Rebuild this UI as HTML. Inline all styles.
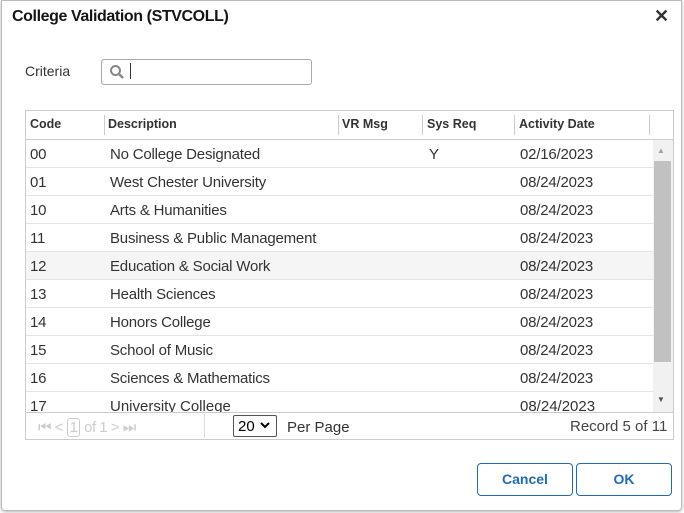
<!DOCTYPE html><html><head><style>
*{box-sizing:border-box;margin:0;padding:0}
body{width:684px;height:513px;background:#fff;font-family:"Liberation Sans",sans-serif;color:#333;position:relative;overflow:hidden}
.dlg{position:absolute;left:1px;top:0;width:681px;height:511px;border:1px solid #bbb;border-radius:0 0 4px 4px;box-shadow:0 1px 3px rgba(0,0,0,.3)}
.t{position:absolute;left:12px;top:8px;font-weight:bold;font-size:16px;color:#151515;letter-spacing:-0.4px}
.x{position:absolute;left:654px;top:6px;font-size:18px;font-weight:bold;color:#333}
.abs{position:absolute}
.row{position:absolute;left:26px;width:627px;height:28px;border-bottom:1px solid #e4e4e4;font-size:15px;color:#333}
.row span{position:absolute;top:6px;letter-spacing:-0.2px}
.hd span{position:absolute;top:6px;font-size:12.5px;font-weight:bold;color:#333}
.sep{position:absolute;top:4px;width:1px;height:20px;background:#ccc}
.btn{position:absolute;top:463px;height:33px;border:1px solid #1f6bb8;border-radius:4px;color:#1f6bb8;font-weight:bold;font-size:14px;text-align:center;line-height:31px}
</style></head><body>
<div class="dlg"></div>
<div class="t">College Validation (STVCOLL)</div>
<div class="x">✕</div>
<div class="abs" style="left:25px;top:63px;font-size:14px;color:#333">Criteria</div>
<div class="abs" style="left:101px;top:59px;width:211px;height:26px;border:1px solid #aaa;border-radius:3px"></div>
<svg class="abs" style="left:109px;top:64px" width="16" height="16"><circle cx="6.5" cy="6.5" r="4.5" fill="none" stroke="#888" stroke-width="2"/><line x1="10" y1="10" x2="14" y2="14" stroke="#888" stroke-width="2.5"/></svg>
<div class="abs" style="left:130px;top:63px;width:1px;height:16px;background:#333"></div>
<div class="abs" style="left:25px;top:110px;width:649px;height:330px;border:1px solid #ccc"></div>
<div class="abs hd" style="left:26px;top:111px;width:647px;height:29px;border-bottom:1px solid #ccc">
<span style="left:4px">Code</span><div class="sep" style="left:78px"></div>
<span style="left:82px">Description</span><div class="sep" style="left:312px"></div>
<span style="left:316px">VR Msg</span><div class="sep" style="left:396px"></div>
<span style="left:401px">Sys Req</span><div class="sep" style="left:488px"></div>
<span style="left:493px">Activity Date</span><div class="sep" style="left:623px"></div>
</div>
<div class="row" style="top:140px"><span style="left:4px">00</span><span style="left:84px">No College Designated</span><span style="left:403px">Y</span><span style="left:494px">02/16/2023</span></div>
<div class="row" style="top:168px"><span style="left:4px">01</span><span style="left:84px">West Chester University</span><span style="left:494px">08/24/2023</span></div>
<div class="row" style="top:196px"><span style="left:4px">10</span><span style="left:84px">Arts &amp; Humanities</span><span style="left:494px">08/24/2023</span></div>
<div class="row" style="top:224px"><span style="left:4px">11</span><span style="left:84px">Business &amp; Public Management</span><span style="left:494px">08/24/2023</span></div>
<div class="row" style="top:252px;background:#f5f5f5"><span style="left:4px">12</span><span style="left:84px">Education &amp; Social Work</span><span style="left:494px">08/24/2023</span></div>
<div class="row" style="top:280px"><span style="left:4px">13</span><span style="left:84px">Health Sciences</span><span style="left:494px">08/24/2023</span></div>
<div class="row" style="top:308px"><span style="left:4px">14</span><span style="left:84px">Honors College</span><span style="left:494px">08/24/2023</span></div>
<div class="row" style="top:336px"><span style="left:4px">15</span><span style="left:84px">School of Music</span><span style="left:494px">08/24/2023</span></div>
<div class="row" style="top:364px"><span style="left:4px">16</span><span style="left:84px">Sciences &amp; Mathematics</span><span style="left:494px">08/24/2023</span></div>
<div class="abs" style="left:26px;top:392px;width:627px;height:20px;overflow:hidden;font-size:15px"><span class="abs" style="left:4px;top:6px">17</span><span class="abs" style="left:84px;top:6px">University College</span><span class="abs" style="left:494px;top:6px">08/24/2023</span></div>
<div class="abs" style="left:653px;top:140px;width:20px;height:272px;background:#f1f1f1"></div>
<div class="abs" style="left:654px;top:161px;width:17px;height:201px;background:#c1c1c1"></div>
<div class="abs" style="left:657px;top:146px;font-size:8px;color:#a0a0a0">▲</div>
<div class="abs" style="left:657px;top:395px;font-size:8px;color:#505050">▼</div>
<div class="abs" style="left:26px;top:412px;width:647px;height:1px;background:#ccc"></div>
<div class="abs" style="left:38px;top:419px;font-size:15px;color:#ccc;letter-spacing:-0.5px">⏮ &lt; <span style="border:1px solid #ccc;border-radius:3px;padding:0 2px">1</span> of 1 &gt; ⏭</div>
<div class="abs" style="left:204px;top:414px;width:1px;height:24px;background:#ddd"></div>
<div class="abs" style="left:233px;top:415px;width:44px;height:22px;border:1px solid #555;border-radius:2px;font-size:15px;color:#000;padding:2px 0 0 4px">20</div>
<svg class="abs" style="left:260px;top:422px" width="10" height="8"><path d="M1 1 L5 5 L9 1" fill="none" stroke="#000" stroke-width="2"/></svg>
<div class="abs" style="left:287px;top:419px;font-size:15px;color:#333">Per Page</div>
<div class="abs" style="left:570px;top:418px;font-size:15px;color:#444">Record 5 of 11</div>
<div class="btn" style="left:477px;width:96px">Cancel</div>
<div class="btn" style="left:576px;width:96px">OK</div>
</body></html>
